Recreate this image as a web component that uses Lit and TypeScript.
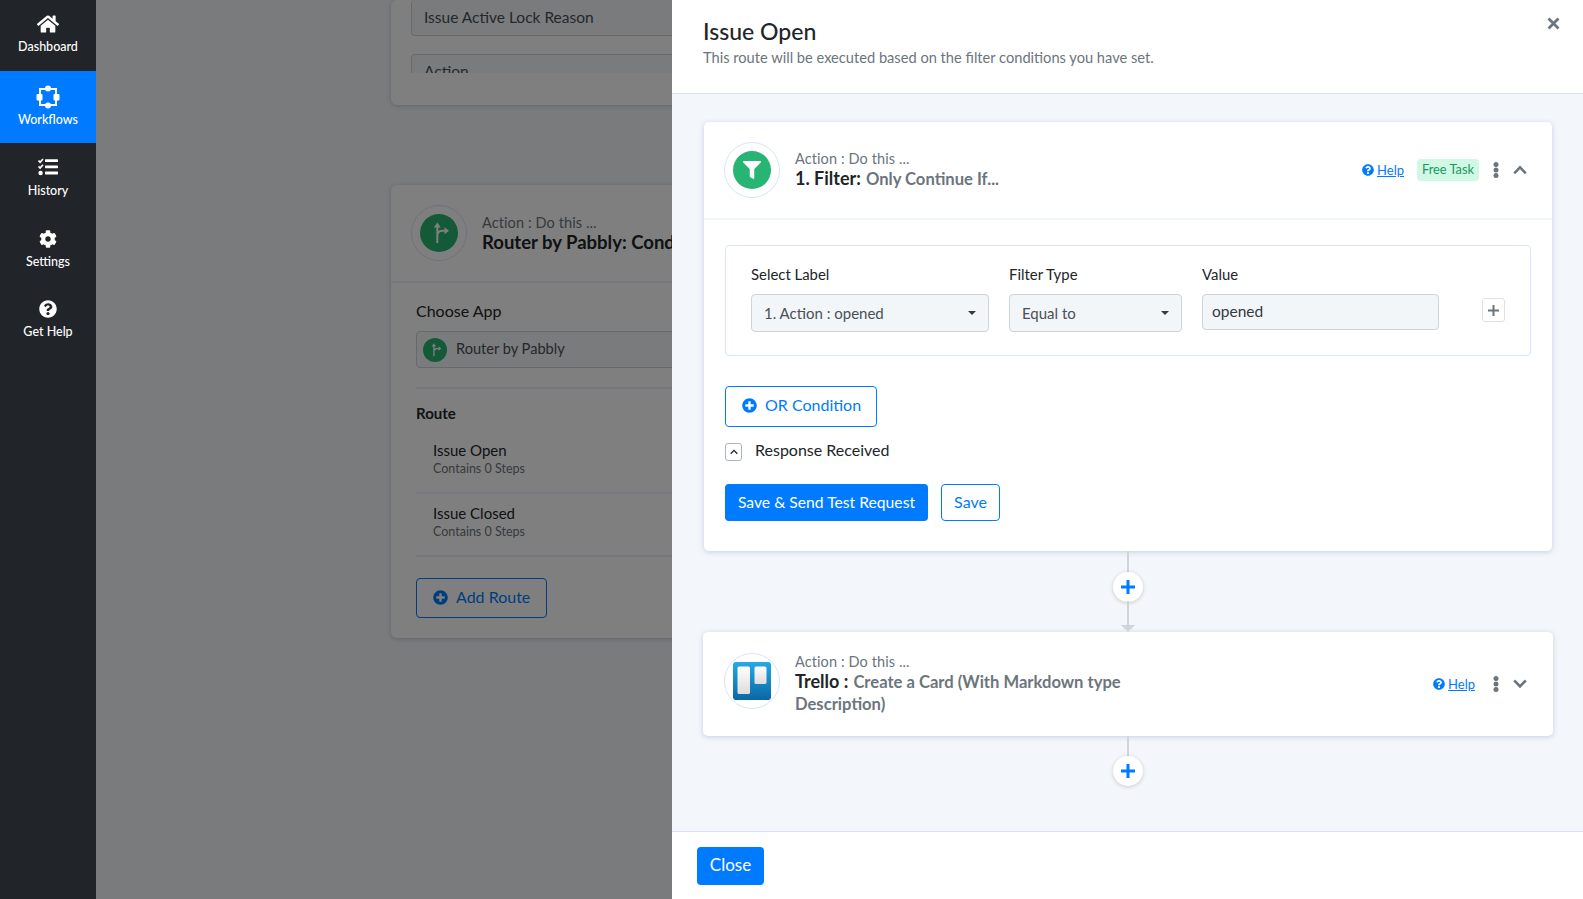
import { LitElement, css, html, svg } from "lit";
import { customElement } from "lit/decorators.js";

const HOME = "M280.37 148.26L96 300.11V464a16 16 0 0 0 16 16l112.06-.29a16 16 0 0 0 15.92-16V368a16 16 0 0 1 16-16h64a16 16 0 0 1 16 16v95.64a16 16 0 0 0 16 16.05L464 480a16 16 0 0 0 16-16V300L295.67 148.26a12.19 12.19 0 0 0-15.3 0zM571.6 251.47L488 182.56V44.05a12 12 0 0 0-12-12h-56a12 12 0 0 0-12 12v72.61L318.47 43a48 48 0 0 0-61 0L4.34 251.47a12 12 0 0 0-1.6 16.9l25.5 31A12 12 0 0 0 45.15 301l235.22-193.74a12.19 12.19 0 0 1 15.3 0L530.9 301a12 12 0 0 0 16.9-1.6l25.5-31a12 12 0 0 0-1.7-16.93z";
const COG = "M487.4 315.7l-42.6-24.6c4.3-23.2 4.3-47 0-70.2l42.6-24.6c4.9-2.8 7.1-8.6 5.5-14-11.1-35.6-30-67.8-54.7-94.6-3.8-4.1-10-5.1-14.8-2.3L380.8 110c-17.9-15.4-38.5-27.3-60.8-35.1V25.8c0-5.6-3.9-10.5-9.4-11.7-36.7-8.2-74.3-7.8-109.2 0-5.5 1.2-9.4 6.1-9.4 11.7V75c-22.2 7.9-42.8 19.8-60.8 35.1L88.7 85.5c-4.9-2.8-11-1.9-14.8 2.3-24.7 26.7-43.6 58.9-54.7 94.6-1.7 5.4.6 11.2 5.5 14L67.3 221c-4.3 23.2-4.3 47 0 70.2l-42.6 24.6c-4.9 2.8-7.1 8.6-5.5 14 11.1 35.6 30 67.8 54.7 94.6 3.8 4.1 10 5.1 14.8 2.3l42.6-24.6c17.9 15.4 38.5 27.3 60.8 35.1v49.2c0 5.6 3.9 10.5 9.4 11.7 36.7 8.2 74.3 7.8 109.2 0 5.5-1.2 9.4-6.1 9.4-11.7v-49.2c22.2-7.9 42.8-19.8 60.8-35.1l42.6 24.6c4.9 2.8 11 1.9 14.8-2.3 24.7-26.7 43.6-58.9 54.7-94.6 1.5-5.5-.7-11.3-5.6-14.1zM256 336c-44.1 0-80-35.9-80-80s35.9-80 80-80 80 35.9 80 80-35.9 80-80 80z";
const QUESTION = "M504 256c0 136.997-111.043 248-248 248S8 392.997 8 256C8 119.083 119.043 8 256 8s248 111.083 248 248zM262.655 90c-54.497 0-89.255 22.957-116.549 63.758-3.536 5.286-2.353 12.415 2.715 16.258l34.699 26.31c5.205 3.947 12.621 3.008 16.665-2.122 17.864-22.658 30.113-35.797 57.303-35.797 20.429 0 45.698 13.148 45.698 32.958 0 14.976-12.363 22.667-32.534 33.976C247.128 238.528 216 254.941 216 296v4c0 6.627 5.373 12 12 12h56c6.627 0 12-5.373 12-12v-1.333c0-28.462 83.186-29.647 83.186-106.667 0-58.002-60.165-102-116.531-102zM256 338c-25.365 0-46 20.635-46 46 0 25.364 20.635 46 46 46s46-20.636 46-46c0-25.365-20.635-46-46-46z";
const PLUS_CIRCLE = "M256 8C119 8 8 119 8 256s111 248 248 248 248-111 248-248S393 8 256 8zm144 276c0 6.6-5.4 12-12 12h-92v92c0 6.6-5.4 12-12 12h-56c-6.6 0-12-5.4-12-12v-92h-92c-6.6 0-12-5.4-12-12v-56c0-6.6 5.4-12 12-12h92v-92c0-6.6 5.4-12 12-12h56c6.6 0 12 5.4 12 12v92h92c6.6 0 12 5.4 12 12v56z";
const FILTER = "M487.976 0H24.028C2.71 0-8.047 25.866 7.058 40.971L192 225.941V432c0 7.831 3.821 15.17 10.237 19.662l80 55.98C298.02 518.69 320 507.493 320 487.98V225.941l184.947-184.97C520.021 25.896 509.338 0 487.976 0z";

const fa = (d: string, size: number, box = "0 0 512 512") => html`
  <svg class="fa" width=${size} height=${size} viewBox=${box} fill="currentColor">${svg`<path d=${d}></path>`}</svg>
`;

const workflowsIcon = html`
  <svg width="24" height="24" viewBox="0 0 24 24" fill="#fff">
    <rect x="4" y="4" width="16" height="16" fill="none" stroke="#fff" stroke-width="2"></rect>
    <circle cx="12" cy="3.5" r="3"></circle>
    <circle cx="12" cy="20.5" r="3"></circle>
    <rect x="0.5" y="9" width="6" height="6.5" rx="1"></rect>
    <rect x="17.5" y="9" width="6" height="6.5" rx="1"></rect>
  </svg>
`;

const historyIcon = html`
  <svg width="20" height="18" viewBox="0 0 20 18" fill="#fff">
    <path d="M0.5 2.6l1.6 1.6L5 1" fill="none" stroke="#fff" stroke-width="1.7"></path>
    <path d="M0.5 8.4l1.6 1.6L5 6.8" fill="none" stroke="#fff" stroke-width="1.7"></path>
    <circle cx="2.6" cy="15" r="2.2"></circle>
    <rect x="7" y="1.2" width="13" height="2.8" rx="0.6"></rect>
    <rect x="7" y="7.4" width="13" height="2.8" rx="0.6"></rect>
    <rect x="7" y="13.6" width="13" height="2.8" rx="0.6"></rect>
  </svg>
`;

const routerIcon = (size: number) => html`
  <svg width=${size} height=${size} viewBox="0 0 38 38">
    <circle cx="19" cy="19" r="19" fill="#28b473"></circle>
    <path d="M17.3 29V12M17.3 22c0-3.5 2-5.3 5-5.3h2.5" fill="none" stroke="#fff" stroke-width="2"></path>
    <path d="M13.8 13.5l3.5-5 3.5 5zM24.5 13.2l4.5 3.5-4.5 3.5z" fill="#fff"></path>
  </svg>
`;

const chevron = (up: boolean, w = 14, color = "#6c757d", sw = 2.6) => html`
  <svg width=${w} height=${w * 0.7} viewBox="0 0 14 9.8">
    <path d=${up ? "M1.2 8.4L7 2.4l5.8 6" : "M1.2 1.4L7 7.4l5.8-6"} fill="none" stroke=${color} stroke-width=${sw}></path>
  </svg>
`;

const dots = html`
  <svg class="dots" width="6" height="16" viewBox="0 0 6 16" fill="#6c757d">
    <circle cx="3" cy="2.5" r="2.5"></circle>
    <circle cx="3" cy="8" r="2.5"></circle>
    <circle cx="3" cy="13.5" r="2.5"></circle>
  </svg>
`;

const trelloIcon = html`
  <svg width="38" height="38" viewBox="0 0 38 38">
    <defs>
      <linearGradient id="tb" x1="0" y1="0" x2="0" y2="1">
        <stop offset="0" stop-color="#27a9e8"></stop>
        <stop offset="1" stop-color="#0a67a3"></stop>
      </linearGradient>
      <linearGradient id="tw" x1="0" y1="0" x2="0" y2="1">
        <stop offset="0" stop-color="#fff"></stop>
        <stop offset="1" stop-color="#dcdcdc"></stop>
      </linearGradient>
    </defs>
    <rect width="38" height="38" rx="3" fill="url(#tb)"></rect>
    <rect x="4.5" y="4.5" width="12.5" height="27.5" rx="1.6" fill="url(#tw)"></rect>
    <rect x="21.5" y="4.5" width="12" height="17.5" rx="1.6" fill="url(#tw)"></rect>
  </svg>
`;

@customElement("app-root")
export class AppRoot extends LitElement {
  nav = [
    { label: "Dashboard", icon: fa(HOME, 22, "0 0 576 512"), cls: "n-dash" },
    { label: "Workflows", icon: workflowsIcon, cls: "n-flow active" },
    { label: "History", icon: historyIcon, cls: "n-hist" },
    { label: "Settings", icon: fa(COG, 18), cls: "n-set" },
    { label: "Get Help", icon: fa(QUESTION, 18), cls: "n-help" },
  ];

  render() {
    return html`
      <nav class="sidebar">
        ${this.nav.map(n => html`
          <a class="nav-item ${n.cls}">
            <span class="nav-icon">${n.icon}</span>
            <span>${n.label}</span>
          </a>
        `)}
      </nav>
      <main class="main">
        <div class="page">
          <section class="bg-card top-card">
            <div class="bg-input">Issue Active Lock Reason</div>
            <div class="bg-clip"><div class="bg-input">Action</div></div>
          </section>
          <section class="bg-card router-card">
            <div class="bg-head">
              <span class="ring">${routerIcon(38)}</span>
              <div class="titles">
                <div class="eyebrow">Action : Do this ...</div>
                <div class="bg-title">Router by Pabbly: Conditional Router</div>
              </div>
            </div>
            <div class="bg-body">
              <div class="bg-label">Choose App</div>
              <div class="bg-select">${routerIcon(24)}<span>Router by Pabbly</span></div>
              <div class="bg-route">Route</div>
              <div class="route-row"><div class="r-name">Issue Open</div><div class="r-sub">Contains 0 Steps</div></div>
              <div class="route-row"><div class="r-name">Issue Closed</div><div class="r-sub">Contains 0 Steps</div></div>
              <button class="btn-outline add-route">${fa(PLUS_CIRCLE, 15)}<span>Add Route</span></button>
            </div>
          </section>
        </div>
        <div class="dim"></div>
        <aside class="drawer">
          <header class="d-head">
            <h1>Issue Open</h1>
            <p>This route will be executed based on the filter conditions you have set.</p>
            <button class="close-x" aria-label="Close">
              <svg width="13" height="13" viewBox="0 0 13 13"><path d="M1.5 1.5l10 10M11.5 1.5l-10 10" stroke="#6c757d" stroke-width="2.8"></path></svg>
            </button>
          </header>
          <div class="d-body">
            <section class="card filter-card">
              <div class="card-head">
                <span class="ring"><span class="filter-badge">${fa(FILTER, 18)}</span></span>
                <div class="titles">
                  <div class="eyebrow">Action : Do this ...</div>
                  <div class="step-title"><b>1. Filter:</b> <span>Only Continue If...</span></div>
                </div>
                <div class="head-actions">
                  <a class="help">${fa(QUESTION, 12)}<u>Help</u></a>
                  <span class="badge">Free Task</span>
                  ${dots}
                  ${chevron(true)}
                </div>
              </div>
              <div class="card-body">
                <div class="cond-box">
                  <div class="field f-label">
                    <label>Select Label</label>
                    <div class="control select">1. Action : opened<i class="caret"></i></div>
                  </div>
                  <div class="field f-type">
                    <label>Filter Type</label>
                    <div class="control select">Equal to<i class="caret"></i></div>
                  </div>
                  <div class="field f-value">
                    <label>Value</label>
                    <div class="control value">opened</div>
                  </div>
                  <button class="mini-plus">
                    <svg width="11" height="11" viewBox="0 0 11 11"><path d="M5.5 0v11M0 5.5h11" stroke="#6c757d" stroke-width="2"></path></svg>
                  </button>
                </div>
                <button class="btn-outline or-btn">${fa(PLUS_CIRCLE, 15)}<span>OR Condition</span></button>
                <div class="response">
                  <span class="resp-toggle">${chevron(true, 8, "#212529", 2.2)}</span>
                  <span class="resp-text">Response Received</span>
                </div>
                <div class="actions">
                  <button class="btn-primary">Save &amp; Send Test Request</button>
                  <button class="btn-outline save">Save</button>
                </div>
              </div>
            </section>
            <div class="connector">
              <i class="line l1"></i>
              <span class="add-step"><svg width="14" height="14" viewBox="0 0 14 14"><path d="M7 0v14M0 7h14" stroke="#007bff" stroke-width="3"></path></svg></span>
              <i class="line l2"></i>
              <i class="arrow"></i>
            </div>
            <section class="card trello-card">
              <div class="card-head plain">
                <span class="ring trello-ring">${trelloIcon}</span>
                <div class="titles wide">
                  <div class="eyebrow">Action : Do this ...</div>
                  <div class="step-title"><b>Trello :</b> <span>Create a Card (With Markdown type Description)</span></div>
                </div>
                <div class="head-actions">
                  <a class="help">${fa(QUESTION, 12)}<u>Help</u></a>
                  <span class="spacer"></span>
                  ${dots}
                  ${chevron(false)}
                </div>
              </div>
            </section>
            <div class="connector last">
              <i class="line l3"></i>
              <span class="add-step"><svg width="14" height="14" viewBox="0 0 14 14"><path d="M7 0v14M0 7h14" stroke="#007bff" stroke-width="3"></path></svg></span>
            </div>
          </div>
          <footer class="d-foot">
            <button class="btn-primary close-btn">Close</button>
          </footer>
        </aside>
      </main>
    `;
  }

  static styles = css`
    :host {
      display: flex;
      height: 899px;
      overflow: hidden;
      font-family: Lato, "Noto Sans", sans-serif;
      color: #212529;
      font-size: 15px;
    }

    button {
      font-family: inherit;
      cursor: pointer;
    }

    .fa {
      display: block;
      flex: none;
    }

    /* sidebar */
    .sidebar {
      width: 96px;
      flex: none;
      background: #212529;
      color: #fff;
      display: flex;
      flex-direction: column;
    }

    .nav-item {
      display: flex;
      flex-direction: column;
      align-items: center;
      font-size: 12.5px;
      font-weight: 500;
      line-height: 16px;
      box-sizing: border-box;
    }

    .nav-icon {
      display: flex;
      align-items: center;
      justify-content: center;
      height: 24px;
    }

    .n-dash { height: 71px; padding-top: 12px; gap: 3px; }
    .n-flow { height: 72px; padding-top: 14px; gap: 3px; background: #007bff; }
    .n-hist { height: 70px; padding-top: 12px; gap: 4px; }
    .n-set { height: 70px; padding-top: 14px; gap: 3px; }
    .n-help { height: 70px; padding-top: 14px; gap: 3px; }

    /* page behind the drawer */
    .main {
      flex: 1;
      position: relative;
      background: #f3f6f9;
      overflow: hidden;
    }

    .page {
      padding-left: 295px;
      width: 640px;
    }

    .bg-card {
      background: #fff;
      border-radius: 6px;
      box-shadow: 0 1px 4px rgba(40, 60, 110, .25);
    }

    .top-card {
      height: 105px;
      box-sizing: border-box;
      padding: 0 20px;
      margin-bottom: 80px;
    }

    .bg-input {
      height: 36px;
      box-sizing: border-box;
      border: 1px solid #ced4da;
      border-top: 0;
      border-radius: 4px;
      background: #f3f6f9;
      padding: 8px 12px;
      font-size: 15.5px;
      color: #495057;
      line-height: 18px;
    }

    .bg-clip {
      height: 19px;
      margin-top: 18px;
      overflow: hidden;
    }

    .bg-clip .bg-input {
      border-top: 1px solid #ced4da;
      padding-top: 7px;
    }

    .router-card {
      height: 453px;
    }

    .bg-head {
      display: flex;
      align-items: center;
      height: 98px;
      box-sizing: border-box;
      padding: 0 20px;
      border-bottom: 2px solid #ebf1fb;
    }

    .bg-title {
      font-size: 18.5px;
      font-weight: 700;
      white-space: nowrap;
      line-height: 22px;
    }

    .bg-body {
      padding: 18px 0 0 25px;
    }

    .bg-label {
      font-size: 16px;
      line-height: 20px;
      margin-bottom: 10px;
    }

    .bg-select {
      display: flex;
      align-items: center;
      gap: 9px;
      height: 37px;
      box-sizing: border-box;
      padding-left: 6px;
      border: 1px solid #ced4da;
      border-radius: 4px;
      background: #f3f6f9;
      font-size: 14.6px;
      color: #495057;
    }

    .bg-select span {
      padding-bottom: 2px;
    }

    .bg-route {
      margin-top: 19px;
      border-top: 2px solid #ebf1fb;
      padding-top: 14px;
      font-size: 15px;
      font-weight: 700;
      line-height: 20px;
    }

    .route-row {
      height: 63px;
      box-sizing: border-box;
      padding: 10px 0 0 17px;
      border-bottom: 2px solid #ebf1fb;
    }

    .bg-route + .route-row { height: 71px; padding-top: 18px; }

    .r-name {
      font-size: 15px;
      line-height: 19px;
    }

    .r-sub {
      font-size: 12.5px;
      line-height: 17px;
      color: #6c757d;
    }

    .dim {
      position: absolute;
      inset: 0;
      background: rgba(0, 0, 0, .5);
    }

    /* drawer */
    .drawer {
      position: absolute;
      top: 0;
      right: 0;
      bottom: 0;
      width: 911px;
      display: flex;
      flex-direction: column;
      background: #f3f6fa;
    }

    .d-head {
      position: relative;
      height: 94px;
      box-sizing: border-box;
      background: #fff;
      border-bottom: 1px solid #d8e2f3;
      padding: 17px 31px 0;
      flex: none;
    }

    h1 {
      margin: 0;
      font-size: 23px;
      font-weight: 500;
      line-height: 28px;
    }

    .d-head p {
      margin: 3px 0 0;
      font-size: 14.65px;
      line-height: 20px;
      color: #6c757d;
    }

    .close-x {
      position: absolute;
      top: 17px;
      right: 23px;
      padding: 0;
      border: 0;
      background: none;
      display: flex;
    }

    .d-body {
      flex: 1;
      padding: 28px 30px 0 31px;
      overflow: hidden;
    }

    .card {
      background: #fff;
      border-radius: 5px;
      box-shadow: 0 1px 5px rgba(60, 90, 170, .25);
    }

    .filter-card {
      height: 429px;
      margin: 0 1px;
    }

    .trello-card { height: 104px; }

    .card-head {
      display: flex;
      align-items: center;
      height: 98px;
      box-sizing: border-box;
      padding: 0 25px 0 20px;
      border-bottom: 2px solid #f0f5fd;
    }

    .card-head.plain {
      height: 104px;
      padding: 0 26px 0 21px;
      border-bottom: 0;
    }

    .ring {
      width: 56px;
      height: 56px;
      flex: none;
      box-sizing: border-box;
      border: 1px solid #d8e4fb;
      border-radius: 50%;
      display: flex;
      align-items: center;
      justify-content: center;
    }

    .trello-ring {
      margin-bottom: 7px;
    }

    .filter-badge {
      width: 38px;
      height: 38px;
      border-radius: 50%;
      background: #28b473;
      color: #fff;
      display: flex;
      align-items: center;
      justify-content: center;
    }

    .titles {
      margin-left: 15px;
    }

    .titles.wide {
      width: 345px;
    }

    .eyebrow {
      font-size: 14.5px;
      line-height: 18px;
      letter-spacing: .1px;
      color: #6c757d;
      margin-bottom: -1px;
    }

    .step-title {
      font-size: 16.6px;
      line-height: 22px;
      color: #6c757d;
      font-weight: 700;
    }

    .step-title b {
      color: #212529;
      font-size: 18px;
      font-weight: 700;
      margin-right: 1px;
    }

    .head-actions {
      margin-left: auto;
      display: flex;
      align-items: center;
    }

    .help {
      display: flex;
      align-items: center;
      gap: 3px;
      font-size: 13px;
      color: #007bff;
    }

    .badge {
      margin-left: 13px;
      margin-right: 14px;
      padding: 0 5px;
      height: 22px;
      line-height: 21px;
      border-radius: 4px;
      background: #d1f7e5;
      color: #179a5f;
      font-size: 12.8px;
    }

    .spacer {
      width: 18px;
    }

    .dots {
      margin-right: 14px;
    }

    .card-body {
      padding: 25px 21px 0;
    }

    .cond-box {
      display: flex;
      align-items: flex-start;
      height: 111px;
      box-sizing: border-box;
      border: 1px solid #d8e4fb;
      border-radius: 4px;
      padding: 19px 25px 0;
    }

    .field label {
      display: block;
      font-size: 14.9px;
      line-height: 18px;
      margin-bottom: 11px;
    }

    .f-label { width: 238px; margin-right: 20px; }
    .f-type { width: 173px; margin-right: 20px; }
    .f-value { width: 237px; margin-right: 43px; }

    .control {
      box-sizing: border-box;
      border: 1px solid #ced4da;
      border-radius: 4px;
      background: #f3f6f9;
      font-size: 15px;
      color: #495057;
    }

    .select {
      height: 38px;
      line-height: 36px;
      padding-left: 12px;
      position: relative;
    }

    .value {
      height: 36px;
      line-height: 32px;
      padding-left: 9px;
      font-size: 15.5px;
      color: #343a40;
    }

    .caret {
      position: absolute;
      right: 12px;
      top: 16px;
      border: 4px solid transparent;
      border-top: 4px solid #343a40;
    }

    .mini-plus {
      width: 23px;
      height: 24px;
      margin-top: 33px;
      padding: 0;
      background: #fff;
      border: 1px solid #dde1e6;
      border-radius: 3px;
      display: flex;
      align-items: center;
      justify-content: center;
    }

    .btn-outline {
      background: #fff;
      border: 1px solid #007bff;
      border-radius: 4px;
      color: #007bff;
      font-size: 16px;
      display: inline-flex;
      align-items: center;
      padding: 0 0 2px;
    }

    .btn-primary {
      background: #007bff;
      border: 0;
      border-radius: 4px;
      color: #fff;
      font-size: 15.7px;
      padding: 0 0 2px;
    }

    .add-route {
      display: flex;
      margin-top: 21px;
      width: 131px;
      height: 40px;
      padding: 0 0 3px 16px;
      gap: 8px;
    }

    .or-btn {
      display: flex;
      margin-top: 30px;
      width: 152px;
      height: 41px;
      padding: 0 0 4px 16px;
      gap: 8px;
    }

    .or-btn .fa,
    .add-route .fa {
      margin-bottom: -1px;
    }

    .response {
      display: flex;
      align-items: center;
      height: 22px;
      margin-top: 14px;
      font-size: 16px;
      line-height: 20px;
      gap: 13px;
    }

    .resp-text {
      padding-bottom: 4px;
    }

    .resp-toggle {
      width: 17px;
      height: 18px;
      box-sizing: border-box;
      border: 1px solid #adb5bd;
      border-radius: 3px;
      display: flex;
      align-items: center;
      justify-content: center;
    }

    .actions {
      display: flex;
      gap: 13px;
      margin-top: 21px;
    }

    .actions .btn-primary {
      width: 203px;
      height: 37px;
    }

    .save {
      width: 59px;
      height: 37px;
      justify-content: center;
      box-sizing: border-box;
    }

    .connector {
      position: relative;
      height: 81px;
    }

    .connector.last {
      height: 60px;
    }

    .line {
      position: absolute;
      left: 424px;
      width: 2px;
      background: #ced4da;
    }

    .l1 { top: 0; height: 22px; }
    .l2 { top: 50px; height: 25px; }
    .l3 { top: 0; height: 22px; }

    .arrow {
      position: absolute;
      left: 418px;
      top: 74px;
      border-left: 7px solid transparent;
      border-right: 7px solid transparent;
      border-top: 7px solid #ced4da;
    }

    .add-step {
      position: absolute;
      left: 410px;
      top: 21px;
      width: 30px;
      height: 30px;
      border-radius: 50%;
      background: #fff;
      box-shadow: 0 1px 4px rgba(0, 0, 0, .18);
      display: flex;
      align-items: center;
      justify-content: center;
    }

    .connector.last .add-step {
      top: 20px;
    }

    .d-foot {
      height: 68px;
      box-sizing: border-box;
      flex: none;
      background: #fff;
      border-top: 1px solid #d8e2f3;
      padding: 15px 25px;
    }

    .close-btn {
      width: 67px;
      height: 38px;
      font-size: 17px;
      padding-bottom: 4px;
    }
  `;
}
